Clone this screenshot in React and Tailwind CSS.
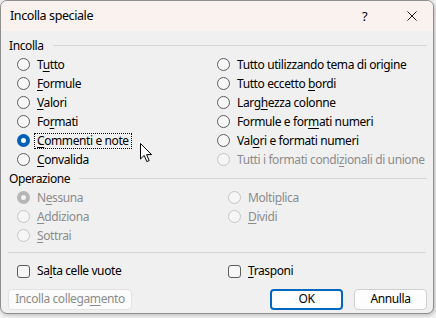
import React from 'react';

const FONT = { fontFamily: '"Noto Sans", "Liberation Sans", sans-serif' };

// label with an underlined access key
const Lbl = ({ text, k }) => (
  <span className="whitespace-nowrap">
    {text.slice(0, k)}
    <span className="underline underline-offset-[2px]">{text[k]}</span>
    {text.slice(k + 1)}
  </span>
);

const Radio = ({ checked, disabled }) => {
  if (disabled && checked) {
    return (
      <span className="w-[13px] h-[13px] rounded-full bg-[#b5b5b5] flex items-center justify-center shrink-0">
        <span className="w-[5px] h-[5px] rounded-full bg-[#f3f3f3]" />
      </span>
    );
  }
  if (checked) {
    return (
      <span className="w-[13px] h-[13px] rounded-full bg-[#005fb8] flex items-center justify-center shrink-0">
        <span className="w-[5px] h-[5px] rounded-full bg-white" />
      </span>
    );
  }
  return (
    <span
      className={`w-[13px] h-[13px] rounded-full border shrink-0 ${
        disabled ? 'border-[#c6c6c6] bg-[#f6f6f6]' : 'border-[#5d5d5d] bg-[#f7f7f7]'
      }`}
    />
  );
};

const Opt = ({ text, k, checked, disabled, focus }) => (
  <div className={`h-[19px] flex items-center gap-[7px] ${disabled ? 'text-[#8c8c8c]' : 'text-black'}`}>
    <Radio checked={checked} disabled={disabled} />
    <span className={focus ? 'outline outline-1 outline-dotted outline-black outline-offset-[1px] px-[1px] -ml-[1px]' : ''}>
      <Lbl text={text} k={k} />
    </span>
  </div>
);

const Group = ({ title }) => (
  <div className="h-[19px] flex items-center gap-[9px] pl-[8px] pr-[6px]">
    <span className="text-black">{title}</span>
    <span className="flex-1 h-px bg-[#d5d5d5]" />
  </div>
);

const Check = ({ text, k }) => (
  <div className="flex items-center gap-[7px]">
    <span className="w-[13px] h-[13px] rounded-[3px] border border-[#5d5d5d] bg-[#f7f7f7] shrink-0" />
    <Lbl text={text} k={k} />
  </div>
);

const Cursor = () => (
  <svg className="absolute left-[140px] top-[143px]" width="13" height="20" viewBox="0 0 13 20">
    <path
      d="M0.5 0.5 L0.5 16 L4.2 12.4 L6.8 18.6 L9.2 17.6 L6.6 11.6 L11.6 11.6 Z"
      fill="white"
      stroke="black"
      strokeWidth="1"
      strokeLinejoin="round"
    />
  </svg>
);

export default function App() {
  return (
    <div className="w-[436px] h-[318px] bg-[#f2f2f2] relative overflow-hidden text-[12px] leading-none tracking-[-0.4px]" style={FONT}>
      <div className="w-[434px] h-[314px] rounded-[7px] border border-[#8e8e8e] overflow-hidden flex flex-col bg-[#f0f0f0] shadow-[1px_1px_4px_rgba(0,0,0,0.25)]">
        {/* title bar */}
        <div className="h-[30px] bg-[#f9f2ee] flex items-center pl-[9px] shrink-0">
          <span className="flex-1 text-black text-[12.5px]">Incolla speciale</span>
          <span className="w-[8px] text-[13px] text-black mr-[37px]">?</span>
          <svg width="10" height="10" viewBox="0 0 10 10" className="mr-[16px]">
            <path d="M0.5 0.5 L9.5 9.5 M9.5 0.5 L0.5 9.5" stroke="#1a1a1a" strokeWidth="1" />
          </svg>
        </div>

        <div className="pt-[5px] flex flex-col">
          <Group title="Incolla" />
          <div className="grid grid-cols-[200px_1fr] pl-[16px]">
            <div className="flex flex-col">
              <Opt text="Tutto" k={1} />
              <Opt text="Formule" k={0} />
              <Opt text="Valori" k={0} />
              <Opt text="Formati" k={2} />
              <Opt text="Commenti e note" k={0} checked focus />
              <Opt text="Convalida" k={0} />
            </div>
            <div className="flex flex-col">
              <Opt text="Tutto utilizzando tema di origine" k={29} />
              <Opt text="Tutto eccetto bordi" k={14} />
              <Opt text="Larghezza colonne" k={4} />
              <Opt text="Formule e formati numeri" k={13} />
              <Opt text="Valori e formati numeri" k={3} />
              <Opt text="Tutti i formati condizionali di unione" k={21} disabled />
            </div>
          </div>

          <Group title="Operazione" />
          <div className="grid grid-cols-[211px_1fr] pl-[16px]">
            <div className="flex flex-col">
              <Opt text="Nessuna" k={1} checked disabled />
              <Opt text="Addiziona" k={0} disabled />
              <Opt text="Sottrai" k={0} disabled />
            </div>
            <div className="flex flex-col">
              <Opt text="Moltiplica" k={5} disabled />
              <Opt text="Dividi" k={0} disabled />
            </div>
          </div>

          <div className="mx-[7px] mt-[7px] h-px bg-[#d5d5d5]" />

          <div className="grid grid-cols-[211px_1fr] pl-[16px] h-[36px] items-center text-black">
            <Check text="Salta celle vuote" k={2} />
            <Check text="Trasponi" k={0} />
          </div>

          <div className="flex items-center pl-[7px] pr-[6px] h-[20px]">
            <div className="w-[124px] h-[21px] rounded-[4px] border border-[#e2e2e2] bg-[#fbfbfb] text-[#8c8c8c] flex items-center justify-center">
              <Lbl text="Incolla collegamento" k={15} />
            </div>
            <div className="flex-1" />
            <div className="w-[73px] h-[21px] rounded-[4px] border-2 border-[#0067c0] bg-white text-black flex items-center justify-center">
              OK
            </div>
            <div className="w-[73px] h-[21px] ml-[11px] rounded-[4px] border border-[#d0d0d0] bg-[#fdfdfd] text-black flex items-center justify-center">
              Annulla
            </div>
          </div>
        </div>
      </div>
      <Cursor />
    </div>
  );
}
